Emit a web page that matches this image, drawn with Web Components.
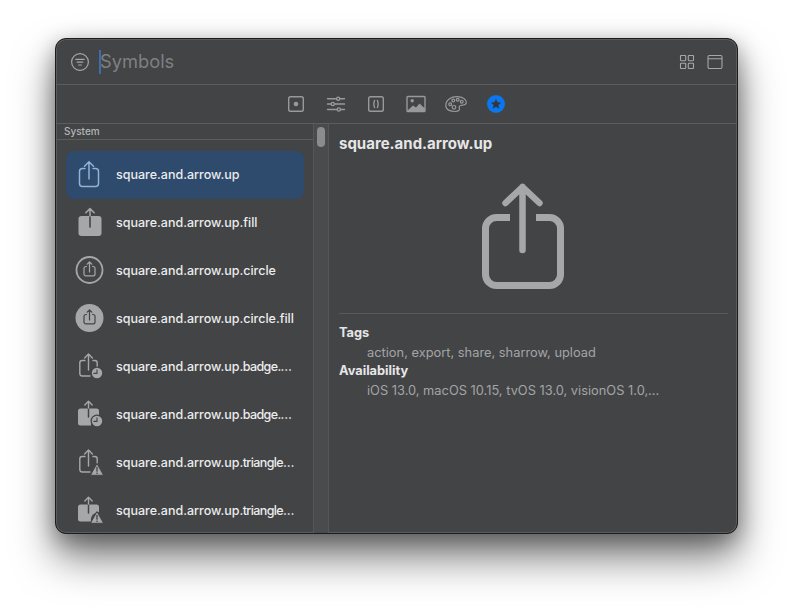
<!DOCTYPE html>
<html>
<head>
<meta charset="utf-8">
<title>Symbols</title>
<style>
	html, body { margin: 0; height: 100%; background: #fff; overflow: hidden; }
	body { padding: 38px 0 0 55px; box-sizing: border-box; font-family: Inter, "Liberation Sans", sans-serif; }
	.tail { letter-spacing: -.6px; }
</style>
</head>
<body>
<sym-window>
	<sym-header slot="header"></sym-header>
	<sym-tabs slot="tabs"></sym-tabs>
	<sym-list slot="list">
		<sym-row icon="outline" selected>square.and.arrow.up</sym-row>
		<sym-row icon="fill">square.and.arrow.up.fill</sym-row>
		<sym-row icon="circle">square.and.arrow.up.circle</sym-row>
		<sym-row icon="circlefill">square.and.arrow.up.circle.fill</sym-row>
		<sym-row icon="clock">square.and.arrow.up<span class="tail">.badge.…</span></sym-row>
		<sym-row icon="clockfill">square.and.arrow.up<span class="tail">.badge.…</span></sym-row>
		<sym-row icon="warn">square.and.arrow.up<span class="tail">.triangle…</span></sym-row>
		<sym-row icon="warnfill">square.and.arrow.up<span class="tail">.triangle…</span></sym-row>
	</sym-list>
	<sym-detail slot="detail"></sym-detail>
</sym-window>
<script>
const DARK = '#434446';
const GREY = '#a6a7a9';
const share = (stroke, w) => `<path d="M12 10.5H9.5A3 3 0 0 0 6.5 13.5V25.5A3 3 0 0 0 9.5 28.5H22.5A3 3 0 0 0 25.5 25.5V13.5A3 3 0 0 0 22.5 10.5H20M16 21V4M11.5 8.2L16 3.8L20.5 8.2" fill="none" stroke="${stroke}" stroke-width="${w}" stroke-linecap="round" stroke-linejoin="round"/>`;
const shareFill = `<rect x="5.5" y="10" width="23" height="20" rx="3" fill="${GREY}"/><path d="M17 21V10" stroke="${DARK}" stroke-width="1.6" stroke-linecap="round"/><path d="M17 10V3M12.8 6.8L17 2.6L21.2 6.8" fill="none" stroke="${GREY}" stroke-width="1.5" stroke-linecap="round" stroke-linejoin="round"/>`;
const smallShare = stroke => `<path d="M13.5 12.5H12.9A1.9 1.9 0 0 0 11 14.4V20A1.9 1.9 0 0 0 12.9 21.9H20.1A1.9 1.9 0 0 0 22 20V14.4A1.9 1.9 0 0 0 20.100 12.500H19.500M16.500 18V8M14.200 10.200L16.500 7.800L18.800 10.200" fill="none" stroke="${stroke}" stroke-width="1.2" stroke-linecap="round" stroke-linejoin="round"/>`;
const thin = `<path d="M12 10.500H9.200A2.400 2.400 0 0 0 6.800 12.900V23.600A2.400 2.400 0 0 0 9.200 26H17M20 10.500H21.800A2.400 2.400 0 0 1 24.200 12.900V17M15.500 20V4.300M11.600 8L15.500 4.100L19.400 8" fill="none" stroke="${GREY}" stroke-width="1.4" stroke-linecap="round" stroke-linejoin="round"/>`;
const solid = `<path d="M7.500 10.500H23.500A2.500 2.500 0 0 1 26 13V18A8 8 0 0 0 18 27.500H7.500A2.500 2.500 0 0 1 5 25V13A2.500 2.500 0 0 1 7.500 10.500Z" fill="${GREY}"/><path d="M15.500 19V10" stroke="${DARK}" stroke-width="1.500" stroke-linecap="round"/><path d="M15.500 10V3.500M11.800 7L15.500 3.300L19.200 7" fill="none" stroke="${GREY}" stroke-width="1.400" stroke-linecap="round" stroke-linejoin="round"/>`;
const clock = `<circle cx="24" cy="23" r="6.500" fill="${DARK}"/><circle cx="24" cy="23" r="5.200" fill="${GREY}"/><path d="M24 19.800V23.400H20.800" fill="none" stroke="${DARK}" stroke-width="1.100" stroke-linecap="round" stroke-linejoin="round"/>`;
const warn = `<path d="M24 17.500L30 28.200A.8.8 0 0 1 29.300 29.300H18.700A.8.8 0 0 1 18 28.200Z" fill="${GREY}" stroke="${DARK}" stroke-width="1" stroke-linejoin="round"/><path d="M24 21.500V25.200" stroke="${DARK}" stroke-width="1.300" stroke-linecap="round"/><circle cx="24" cy="27.300" r=".8" fill="${DARK}"/>`;
const ICONS = {
	outline: share('#8fb4d6', 1.5),
	fill: shareFill,
	circle: `<circle cx="16.500" cy="16" r="13" fill="none" stroke="${GREY}" stroke-width="1.800"/>` + smallShare(GREY),
	circlefill: `<circle cx="16.500" cy="16" r="14" fill="${GREY}"/>` + smallShare(DARK),
	clock: thin + clock,
	clockfill: solid + clock,
	warn: thin + warn,
	warnfill: solid + warn
};

// window
window.customElements.define('sym-window', class extends HTMLElement {
	constructor() {
		super();
		let shadowRoot = this.attachShadow({mode: 'open'});
		shadowRoot.innerHTML = `
<style>
	:host {
		display: grid;
		grid-template-columns: 257px 16px 1fr;
		grid-template-rows: 46px 39px 1fr;
		box-sizing: border-box;
		width: 683px;
		height: 496px;
		background: ${DARK};
		border: 1px solid #1c1c1d;
		border-radius: 11px;
		overflow: hidden;
		box-shadow: inset 0 0 0 1px #5b5c5e, 0 24px 40px rgba(0, 0, 0, .5), 0 6px 22px rgba(0, 0, 0, .34);
		color: #e9e9ea;
	}
	.header { grid-column: 1 / 4; border-bottom: 1px solid #5c5d5f; }
	.tabs { grid-column: 1 / 4; border-bottom: 1px solid #5c5d5f; }
	.gutter {
		background: #4a4b4d;
		border-left: 1px solid #55565a;
		border-right: 1px solid #55565a;
		box-sizing: border-box;
		display: flex;
		justify-content: center;
		padding-top: 3px;
	}
	.thumb { width: 8px; height: 20px; border-radius: 4px; background: #8b8c8e; }
	.list, .detail { min-height: 0; overflow: hidden; }
</style>
<div class="header"><slot name="header"></slot></div>
<div class="tabs"><slot name="tabs"></slot></div>
<div class="list"><slot name="list"></slot></div>
<div class="gutter"><div class="thumb"></div></div>
<div class="detail"><slot name="detail"></slot></div>
    `;
	}
});

// search bar
window.customElements.define('sym-header', class extends HTMLElement {
	constructor() {
		super();
		let shadowRoot = this.attachShadow({mode: 'open'});
		shadowRoot.innerHTML = `
<style>
	:host {
		display: flex;
		align-items: center;
		box-sizing: border-box;
		height: 45px;
		padding: 0 14px 0 14px;
	}
	svg { display: block; flex: none; }
	.caret { width: 2px; height: 24px; background: #3f6ea6; margin-left: 9px; flex: none; }
	.placeholder { font-size: 18.300px; color: #7f8082; margin-left: -1px; flex: 1; padding-bottom: 2px; }
	.grid { margin-right: 12px; }
</style>
<svg width="20" height="20" viewBox="0 0 20 20" fill="none" stroke="${GREY}" stroke-width="1.2" stroke-linecap="round">
	<circle cx="10" cy="10" r="8.400"/><path d="M5.800 7.400H14.200M7.200 10.200H12.800M8.600 13H11.400"/>
</svg>
<div class="caret"></div>
<div class="placeholder">Symbols</div>
<svg class="grid" width="16" height="16" viewBox="0 0 16 16" fill="none" stroke="${GREY}" stroke-width="1.1">
	<rect x="1.500" y="1.500" width="5.200" height="5.200" rx=".6"/><rect x="9.300" y="1.500" width="5.200" height="5.200" rx=".6"/>
	<rect x="1.500" y="9.300" width="5.200" height="5.200" rx=".6"/><rect x="9.300" y="9.300" width="5.200" height="5.200" rx=".6"/>
</svg>
<svg width="16" height="16" viewBox="0 0 16 16" fill="none" stroke="${GREY}" stroke-width="1.1">
	<rect x="1" y="1.500" width="14" height="13" rx="1.400"/><path d="M1 4.800H15"/>
</svg>
    `;
	}
});

// category tabs
window.customElements.define('sym-tabs', class extends HTMLElement {
	constructor() {
		super();
		let shadowRoot = this.attachShadow({mode: 'open'});
		const c = '#98999b';
		shadowRoot.innerHTML = `
<style>
	:host {
		display: flex;
		justify-content: center;
		align-items: center;
		gap: 16px;
		height: 38px;
		padding-right: 1px;
	}
	svg { display: block; width: 24px; height: 24px; }
</style>
<svg viewBox="0 0 24 24" fill="none" stroke="${c}" stroke-width="1.4">
	<rect x="4.700" y="4.700" width="14.600" height="14.600" rx="1.800"/><circle cx="12" cy="12" r="2.300" fill="${c}" stroke="none"/>
</svg>
<svg viewBox="0 0 24 24" fill="none" stroke="${c}" stroke-width="1.400" stroke-linecap="round">
	<path d="M3.500 6.700H12.500M16 6.700H20.500M3.500 12H7M10.500 12H20.500M3.500 17.500H13M16.500 17.500H20.500"/>
	<circle cx="14.200" cy="6.700" r="1.600"/><circle cx="8.800" cy="12" r="1.600"/><circle cx="14.800" cy="17.500" r="1.600"/>
</svg>
<svg viewBox="0 0 24 24" fill="none" stroke="${c}" stroke-width="1.400" stroke-linecap="round">
	<rect x="4.700" y="4.700" width="14.600" height="14.600" rx="1.800"/>
	<path d="M10.500 8.500Q9 12 10.500 15.500M13.500 8.500Q15 12 13.500 15.500"/>
</svg>
<svg viewBox="0 0 24 24" fill="none" stroke="${c}" stroke-width="1.400">
	<rect x="3" y="4.500" width="18" height="15" rx=".8"/>
	<circle cx="8.200" cy="8.800" r="1.700" fill="${c}" stroke="none"/>
	<path d="M3 19L9 13.500L12 15.500L15.500 11.500L21 16.500V19.500H3Z" fill="${c}" stroke="none"/>
</svg>
<svg viewBox="0 0 24 24" fill="none" stroke="${c}" stroke-width="1.200" stroke-linejoin="round">
	<path d="M1.800 13.500C1.800 8 7 4.700 13 4.700C19 4.700 22.300 7.500 22.300 10.500C22.300 13.300 18.300 13.300 16.700 13.500C15.200 13.700 15 15.200 15.400 16.200C16 18 14.500 19.500 11.500 19.500C6 19.500 1.800 17.800 1.800 13.500Z"/>
	<circle cx="6.200" cy="12.300" r="1.400"/><circle cx="9.300" cy="8.600" r="1.400"/><circle cx="13.700" cy="7.800" r="1.400"/><circle cx="17.700" cy="9.700" r="1.400"/><circle cx="10" cy="15.300" r="1.800"/>
</svg>
<svg viewBox="0 0 24 24">
	<circle cx="12" cy="12" r="9" fill="#0a76f0"/>
	<path d="M12 6.800L13.500 10.300L17.200 10.600L14.400 13L15.300 16.700L12 14.700L8.700 16.700L9.600 13L6.800 10.600L10.500 10.300Z" fill="#33373d"/>
</svg>
    `;
	}
});

// sidebar list
window.customElements.define('sym-list', class extends HTMLElement {
	constructor() {
		super();
		let shadowRoot = this.attachShadow({mode: 'open'});
		shadowRoot.innerHTML = `
<style>
	:host { display: block; }
	.section {
		height: 15px;
		line-height: 15px;
		padding-left: 8px;
		font-size: 10px;
		font-weight: 500;
		color: #b4b5b7;
		border-bottom: 1px solid #5c5d5f;
	}
	.rows { padding: 11px 9px 0 10px; display: flex; flex-direction: column; }
</style>
<div class="section">System</div>
<div class="rows"><slot></slot></div>
    `;
	}
});

// sidebar row
window.customElements.define('sym-row', class extends HTMLElement {
	constructor() {
		super();
		let shadowRoot = this.attachShadow({mode: 'open'});
		shadowRoot.innerHTML = `
<style>
	:host {
		display: flex;
		align-items: center;
		box-sizing: border-box;
		height: 48px;
		padding-bottom: 2px;
		flex: none;
		border-radius: 8px;
		font-size: 12.500px;
		font-weight: 500;
		color: #ececed;
		white-space: nowrap;
	}
	:host([selected]) { background: #2e4a6c; }
	svg { display: block; width: 32px; height: 32px; margin: 0 11px 0 7px; flex: none; }
	.label { display: block; }
</style>
<svg viewBox="0 0 32 32">${ICONS[this.getAttribute('icon')]}</svg>
<div class="label"><slot></slot></div>
    `;
	}
});

// detail panel
window.customElements.define('sym-detail', class extends HTMLElement {
	constructor() {
		super();
		let shadowRoot = this.attachShadow({mode: 'open'});
		shadowRoot.innerHTML = `
<style>
	:host {
		display: block;
		padding: 0 9px 0 10px;
		font-size: 13px;
	}
	h1 { margin: 0; padding-top: 11px; font-size: 15px; line-height: 18px; font-weight: 700; color: #e6e6e7; }
	.hero { display: flex; justify-content: center; padding: 29px 23px 0 0; height: 131px; border-bottom: 1px solid #58595b; }
	svg { display: block; width: 90px; height: 110px; }
	h2 { margin: 0; font-size: 12.800px; line-height: 18px; font-weight: 700; color: #e6e6e7; }
	p { margin: 2px 0 0 28px; font-size: 12.850px; line-height: 18px; color: #a3a4a6; white-space: nowrap; }
	.meta { padding-top: 10px; }
</style>
<h1>square.and.arrow.up</h1>
<div class="hero">
	<svg viewBox="0 0 90 110" fill="none" stroke="${GREY}" stroke-linecap="round" stroke-linejoin="round">
		<path d="M33 35.500H19.500A11 11 0 0 0 8.500 46.500V92.500A11 11 0 0 0 19.500 103.500H72.500A11 11 0 0 0 83.500 92.500V46.500A11 11 0 0 0 72.500 35.500H59" stroke-width="7" stroke-linecap="butt"/>
		<path d="M45.500 68V5M28.500 21L45.500 5L62.500 21" stroke-width="6.500"/>
	</svg>
</div>
<div class="meta">
	<h2>Tags</h2>
	<p>action, export, share, sharrow, upload</p>
	<h2>Availability</h2>
	<p>iOS 13.0, macOS 10.15, tvOS 13.0, visionOS 1.0,...</p>
</div>
    `;
	}
});
</script>
</body>
</html>
